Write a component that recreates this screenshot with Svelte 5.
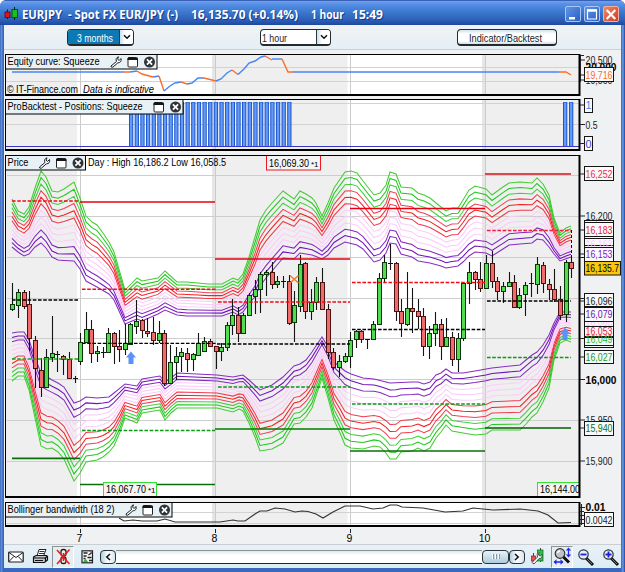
<script>
  const colors = ['#45cc33', '#1fc81f', '#3fd03a', '#f0405a', '#f62020', '#f23a50', '#fccdfb', '#fcc9fb', '#fccdfb', '#8526c4', '#6f12b8', '#8a2cc4'];

  const upperOuter = [[12,199],[18,211],[24,214],[29,207],[35,188],[41,171],[46,177],[52,191],[58,192],[64,189],[74,182],[80,198],[86,216],[92,222],[97,225],[103,233],[109,242],[114,252],[125,290],[131,284],[137,278],[142,281],[158,278],[165,271],[177,282],[187,282],[198,283],[208,284],[222,284],[233,278],[238,280],[243,274],[249,257],[255,237],[260,220],[266,210],[272,203],[283,191],[294,199],[300,191],[306,194],[312,198],[316,203],[322,216],[328,203],[334,188],[345,172],[351,171],[357,173],[363,181],[374,195],[380,193],[386,185],[390,172],[396,174],[401,187],[412,188],[418,193],[424,195],[430,198],[441,207],[446,211],[452,208],[458,208],[463,200],[469,190],[475,186],[486,189],[492,195],[503,187],[509,183],[520,182],[532,183],[537,178],[543,184],[549,195],[554,218],[560,233],[566,228],[571,226]];
  const upperInner = [[12,247],[18,252],[24,256],[29,254],[35,247],[41,243],[46,248],[52,257],[58,260],[74,261],[80,269],[86,281],[97,287],[109,294],[114,300],[125,324],[137,319],[142,321],[158,314],[165,310],[177,315],[187,316],[222,316],[233,312],[238,315],[243,312],[249,303],[255,297],[260,286],[266,278],[272,271],[283,258],[294,259],[300,253],[312,255],[322,259],[328,255],[334,248],[345,242],[357,245],[363,249],[374,262],[380,260],[386,253],[390,243],[396,244],[401,254],[412,257],[418,261],[430,263],[441,266],[446,268],[458,266],[463,262],[469,256],[475,252],[486,253],[492,256],[503,249],[509,245],[520,244],[532,243],[537,239],[543,240],[549,247],[554,254],[560,261],[571,257]];
  const lowerInner = [[12,333],[18,332],[24,332],[29,340],[35,358],[41,373],[52,380],[58,383],[64,387],[74,403],[80,401],[86,397],[97,398],[109,397],[114,393],[125,384],[137,386],[142,379],[160,376],[165,382],[171,378],[177,373],[187,375],[217,375],[233,377],[243,375],[249,380],[260,390],[266,388],[272,385],[283,377],[294,366],[300,364],[306,360],[312,352],[322,337],[328,347],[334,362],[340,367],[345,371],[351,374],[363,378],[374,379],[390,383],[412,382],[418,382],[424,384],[430,382],[436,375],[441,373],[446,369],[452,373],[463,373],[475,371],[486,369],[503,366],[520,365],[526,360],[532,355],[537,352],[543,345],[549,335],[554,323],[560,312],[571,312]];
  const lowerOuter = [[12,381],[18,376],[24,376],[29,390],[35,418],[41,446],[47,449],[52,448],[58,452],[64,459],[74,481],[80,473],[86,462],[97,460],[103,457],[109,452],[114,446],[120,432],[125,418],[137,423],[142,413],[160,410],[165,420],[171,413],[177,408],[217,408],[233,412],[239,409],[243,411],[249,423],[255,437],[260,451],[272,449],[283,443],[294,424],[300,423],[306,417],[312,408],[322,378],[328,398],[334,420],[340,433],[345,445],[351,448],[363,449],[374,446],[380,447],[386,453],[390,459],[396,459],[401,452],[412,451],[418,448],[424,451],[430,448],[436,438],[441,432],[446,425],[452,431],[463,433],[475,435],[486,434],[492,430],[520,430],[526,424],[532,417],[537,413],[543,402],[549,388],[554,360],[560,343],[566,340],[571,342]];

  function at(points, x) {
    for (let i = 1; i < points.length; i++) {
      if (x <= points[i][0]) {
        const [x0, y0] = points[i - 1];
        const [x1, y1] = points[i];
        return y0 + ((y1 - y0) * (x - x0)) / (x1 - x0);
      }
    }
    return points[points.length - 1][1];
  }
  function band(outer, inner) {
    const xs = outer.map((p) => p[0]);
    return colors.map((color, k) => ({
      color,
      points: xs.map((x) => {
        const a = at(outer, x);
        const b = at(inner, x);
        return `${x},${(a + ((b - a) * k) / 11).toFixed(1)}`;
      }).join(' ')
    }));
  }
  const bands = [...band(upperOuter, upperInner), ...band(lowerOuter, lowerInner)];

  // x, high, low, body top, body bottom, direction
  const candles = [
    [12,283,311,304,309,1],[18,289,318,292,305,1],[24,290,309,292,306,0],[29,291,350,304,338,0],[35,336,388,340,368,0],[41,358,397,370,387,0],[46,349,388,357,387,1],[52,316,362,353,357,1],[57,351,372,354,354,1],[63,355,375,356,359,0],[69,352,379,359,378,0],[75,376,383,378,378,1],
    [80,333,365,342,361,1],[86,312,343,329,342,1],[91,320,363,329,353,0],[97,346,362,351,353,1],[103,347,358,352,352,1],[108,328,353,333,352,1],[114,332,364,333,346,0],[119,330,362,346,349,0],[125,324,355,343,349,1],[130,323,345,324,344,1],[136,300,334,321,326,1],[142,319,338,320,330,0],[147,318,337,331,333,0],[153,317,345,332,340,0],[159,321,343,333,340,1],[164,330,386,333,383,0],[170,345,383,362,383,1],[176,347,380,356,362,1],[181,348,372,352,356,1],[187,348,372,353,359,0],[193,353,371,354,359,1],[198,333,355,343,355,1],[204,337,352,341,351,1],[210,339,347,341,346,0],
    [216,346,369,346,351,0],[221,343,361,347,351,1],[227,322,351,325,347,1],[232,299,335,315,325,1],[238,307,342,315,333,0],[243,313,334,315,333,1],[249,293,315,295,315,1],[255,280,314,289,296,1],[260,272,313,274,289,1],[266,270,296,272,274,1],[272,262,289,272,284,0],[277,276,288,281,284,1],[283,276,288,281,281,1],[289,275,325,281,323,0],[294,291,342,305,322,1],[300,255,312,264,306,1],[305,262,319,263,311,0],[311,289,320,302,311,1],[316,277,310,282,302,1],[322,268,309,282,309,0],[328,304,359,309,352,0],[333,348,370,352,367,0],[339,355,377,361,367,1],[345,353,363,356,361,1],
    [350,332,368,340,356,1],[356,330,348,331,339,1],[361,330,343,331,339,0],[367,339,349,339,339,1],[373,321,339,324,339,1],[379,273,325,278,324,1],[384,255,282,262,278,1],[390,244,270,263,263,1],[396,262,321,263,311,0],[401,299,337,311,323,0],[407,272,326,308,324,1],[412,288,333,308,311,0],[418,299,329,311,316,0],[423,308,356,316,346,0],[429,326,359,333,346,1],[435,312,346,324,333,1],[441,319,360,324,346,0],[446,318,346,337,346,1],[452,332,366,337,359,0],[458,333,372,338,359,1],[463,282,341,283,338,1],[469,262,304,272,283,1],[475,271,290,272,279,0],[480,262,292,279,288,0],
    [486,255,289,263,288,1],[492,251,288,263,281,0],[497,277,300,281,291,0],[503,282,303,286,291,1],[509,272,286,282,286,1],[514,275,307,282,307,0],[519,288,309,295,307,1],[525,282,316,285,294,1],[531,273,297,283,283,1],[537,257,294,264,284,1],[543,262,293,265,283,0],[549,279,300,284,289,0],[554,269,302,289,299,0],[560,286,320,299,315,0],[566,260,322,262,314,1],[571,257,278,262,268,0]
  ];

  // x1, x2, y, colour, dashed
  const levels = [
    [80,215,202,'#e80010',0],[215,350,259,'#e80010',0],[350,485,208.5,'#e80010',0],[485,571,174,'#d4121c',0],
    [12,78,201,'#f40a14',1],[82,216,289.3,'#f40a14',1],[218,350,302,'#f40a14',1],[352,485,282.5,'#f40a14',1],[487,571,230.5,'#f0203a',1],
    [12,79,300,'#000',1],[82,216,343.4,'#000',1],[217,350,344,'#000',1],[352,485,329.5,'#000',1],[487,571,301,'#000',1],
    [12,78,359,'#18a818',1],[82,215,430.5,'#0a9a14',1],[218,350,387,'#0a9a14',1],[352,485,404,'#0a9a14',1],[487,571,357.5,'#0a9a14',1],
    [12,80,458.3,'#087008',0],[80,215,484.5,'#087008',0],[215,350,429,'#007c00',0],[350,485,451,'#087008',0],[485,571,428,'#005c00',0]
  ];

  const equity = [
    ['b','12,72 124,72'],['o','124,72 130,72'],['b','130,72 137,71'],['o','137,71 142,74 153,77'],['b','153,77 159,76'],['o','159,76 164,91'],
    ['b','164,91 170,86 175,83 181,82'],['o','181,82 187,84'],['b','187,84 192,83 198,78 204,78'],['o','204,78 216,81'],['b','216,81 221,79 227,73 232,70'],['o','232,70 238,74.5'],
    ['b','238,74.5 244,69 249,63 255,61 261,57 265,56'],['o','265,56 272,60'],['b','272,59 282,59'],['o','282,59 288,72 293,72'],['b','293,72 559,72'],['o','559,72 566,72 571,75']
  ];
  const bars = [...Array.from({ length: 29 }, (_, i) => 129 + i * 5.65), 563, 569];
  const bandwidth = '119,518 124,521 133,520 142,521 157,521 165,519 175,522 220,522 233,520 238,521 245,521 255,514 260,511 267,511 275,508 285,509 295,512 302,511 308,511.5 316,514 323,518 333,512 345,506 360,506 373,509 383,508 390,505 397,505 402,507 423,508 445,512 463,511 473,508 493,510 520,509 538,511 548,515 558,523 571,522.5';

  // text, centre y, box top, box bottom, colour
  const priceTags = [
    ['16,200',216,0,0,'#222'],
    ['16,183',230,222,237,'#ee2030'],
    ['16,163',244,238,246,'#fcd0fc'],
    ['16,153',254,247,262,'#8220c0'],
    ['16,065',322,318,330,'#fcc8fa'],
    ['16,053',331,326,337,'#f02030'],
    ['16,049',339,337,346,'#30b828'],
    ['16,096',301,293,307,'#222'],
    ['16,079',314,307,322,'#6c18b0'],
    ['16,252',174,166,181,'#e83040'],
    ['16,027',357,350,364,'#1c9c28'],
    ['15,950',420,0,0,'#222'],
    ['15,940',428,421,436,'#107010'],
    ['15,900',461,0,0,'#222']
  ];
</script>

{#snippet fit(cls, width, text)}
  <svg class="fit {cls}" {width} height="16"><text x="0" y="12" textLength={width} lengthAdjust="spacingAndGlyphs">{text}</text></svg>
{/snippet}

{#snippet backdrop(top, bottom)}
  <rect x="6" y={top} width="573" height={bottom - top} fill="#efefef" />
  <rect x="77" y={top} width="135" height={bottom - top} fill="#fff" />
  <rect x="347.5" y={top} width="134.5" height={bottom - top} fill="#fff" />
  {#each [212, 482] as x}<rect {x} y={top} width="3" height={bottom - top} fill="#e6e6e6" />{/each}
  {#each [80, 215, 350, 485] as x}<rect {x} y={top} width="1" height={bottom - top} fill="#cbcbcb" />{/each}
{/snippet}

{#snippet frame(top, bottom)}
  <path d="M5.5 {bottom}V{top + 0.5}H580" fill="none" stroke="#000" />
  <path d="M5 {bottom - 1}H579.5V{top}" fill="none" stroke="#000" stroke-width="2" />
{/snippet}

{#snippet header(top, width, text, textWidth, wrench)}
  <rect x="5.5" y={top + 0.5} {width} height="14.5" fill="#e8f1f6" stroke="#000" />
  <text class="tx" x="7.5" y={top + 11.3} textLength={textWidth} lengthAdjust="spacingAndGlyphs">{text}</text>
  {#if wrench}
    <g transform="translate({width - 42} {top + 2})">
      <path d="M1.5 10L7 5.5Q5.5 2 9 .8L8 3.2L9.6 4.4L11.6 2.5Q12.2 6.8 8.4 6.8L3.3 11.2Q1.2 11.6 1.5 10Z" fill="#fff" stroke="#1c2024" stroke-width="1" />
    </g>
  {/if}
  <g transform="translate({width - 24.5} {top + 2.5})">
    <rect x="1" y="1" width="9.5" height="9.5" rx="1" fill="#fff" stroke="#222" />
    <path d="M.5 3.5V2L2 .5H6V1.5H10.5L11 3.5Z" fill="#151515" />
  </g>
  <g transform="translate({width - 2} {top + 8})">
    <circle r="5.5" fill="#303436" />
    <path d="M-2.6-2.6L2.6 2.6M2.6-2.6L-2.6 2.6" stroke="#fff" stroke-width="1.7" />
  </g>
{/snippet}

{#snippet tag(text, cy, top, bottom, color, width = 28)}
  {#if bottom}<rect x="584.5" y={top + 0.5} width={width + 1} height={bottom - top - 1} fill="#f8fafb" stroke="#151515" />{/if}
  {#if !bottom || bottom - top > 13}<path d="M580 {cy}h5" stroke="#222" />{/if}
  <text class="tx" x="585.5" y={cy + 4} fill={color} textLength={width - 1} lengthAdjust="spacingAndGlyphs">{text}</text>
{/snippet}

{#snippet magnifier(sign)}
  <svg width="20" height="20" viewBox="0 0 20 20">
    <path d="M9 10L17 18" stroke="#111" stroke-width="3" />
    <path d="M11 12L16 17" stroke="#777" stroke-width="1" />
    <circle cx="7.5" cy="7.5" r="4.7" fill="#e3edfb" stroke="#333" stroke-width="1.2" />
    <path d={sign === '+' ? 'M4.5 7.5h6M7.5 4.5v6' : 'M4.5 7.5h6'} stroke="#1720e8" stroke-width="1.8" />
  </svg>
{/snippet}

<div class="window">
  <header class="title">
    <svg class="logo" width="15" height="14" viewBox="0 0 15 14">
      <path d="M3.5 2.5v9.5M10.5 0v13" stroke="#101820" />
      <rect x="1" y="5" width="5" height="5.5" fill="#e81018" stroke="#5a0808" stroke-width=".8" />
      <rect x="8" y="2.5" width="5.5" height="8" fill="#18c020" stroke="#063e0c" stroke-width=".8" />
    </svg>
    {@render fit('t-name', 156, 'EURJPY  - Spot FX EUR/JPY (-)')}
    {@render fit('t-price', 107, '16,135.70 (+0.14%)')}
    {@render fit('t-time', 33, '1 hour')}
    {@render fit('t-clock', 31, '15:49')}
    <div class="buttons">
      <i class="wb"><svg width="16" height="17"><rect x="4" y="11" width="6" height="2.5" fill="#fff" /></svg></i>
      <i class="wb"><svg width="16" height="17"><path d="M3.5 4V13h9V4Z" fill="none" stroke="#fff" stroke-width="1.2" /><path d="M3 4.5h10" stroke="#fff" stroke-width="2.4" /></svg></i>
      <i class="wb close"><svg width="16" height="17"><path d="M3.7 4L12.3 13M12.3 4L3.7 13" stroke="#fff" stroke-width="2.1" /></svg></i>
    </div>
  </header>

  <div class="toolbar">
    <div class="combo period">
      <span class="value">{@render fit('', 36, '3 months')}</span>
      <span class="arrow"><svg width="8" height="6"><path d="M1 1.2L4 4.2L7 1.2" fill="none" stroke="#111" stroke-width="1.5" /></svg></span>
    </div>
    <div class="combo unit">
      <span class="value">{@render fit('', 25, '1 hour')}</span>
      <span class="arrow"><svg width="8" height="6"><path d="M1 1.2L4 4.2L7 1.2" fill="none" stroke="#111" stroke-width="1.5" /></svg></span>
    </div>
    <div class="button">{@render fit('', 73, 'Indicator/Backtest')}</div>
  </div>

  <main>
    <svg class="equity" width="617" height="47" viewBox="4 51 617 47">
      {@render backdrop(55, 95)}
      <path d="M6 67.5H579M6 81.5H579" stroke="#d2d2d2" />
      {#each equity as [c, points]}
        <polyline {points} fill="none" stroke={c === 'b' ? '#4684f4' : '#fb6d26'} stroke-width="1.4" />
      {/each}
      <text class="tx" x="7" y="93" textLength="71" lengthAdjust="spacingAndGlyphs">© IT-Finance.com</text>
      <text class="tx italic" x="83" y="93" textLength="71" lengthAdjust="spacingAndGlyphs">Data is indicative</text>
      {@render frame(54, 96)}
      {@render header(54, 151.5, 'Equity curve: Squeeze', 92, true)}
      {@render tag('20,500', 60, 0, 0, '#222')}
      <text class="tx bold" x="585.5" y="71" textLength="31" lengthAdjust="spacingAndGlyphs">20,000</text>
      {@render tag('19,500', 80, 0, 0, '#222')}
      <path d="M580.5 55V82M580 55.5h4" stroke="#222" />
      {@render tag('19,716', 75, 67, 82, '#fb6d26')}
    </svg>

    <svg width="617" height="55" viewBox="4 98 617 55">
      {@render backdrop(100, 150)}
      <path d="M6 103.5H579M6 124.5H579" stroke="#d2d2d2" />
      {#each bars as x}
        <rect {x} y="102" width="4.3" height="45" fill="#1c57cc" />
        <rect x={x + 1} y="102.5" width="2.3" height="44" fill="#639af9" />
      {/each}
      <path d="M6 146.5H579" stroke="#3838c4" />
      {@render frame(99, 151)}
      {@render header(99, 177.5, 'ProBacktest - Positions: Squeeze', 135, false)}
      {@render tag('1', 105, 98, 113, '#4f84ee', 7)}
      {@render tag('0.5', 124.5, 0, 0, '#222', 13)}
      {@render tag('0', 143.5, 136, 151, '#4040d0', 7)}
    </svg>

    <svg width="617" height="347" viewBox="4 153 617 347">
      {@render backdrop(156, 497)}
      {#each [175.5, 216.5, 257.5, 298.5, 338.5, 379.5, 420.5, 461.5] as y}
        <path d="M7 {y}H579" stroke="#cdcdcd" />
      {/each}
      {#each bands as line}
        <polyline points={line.points} fill="none" stroke={line.color} stroke-width="1.05" />
      {/each}
      {#each candles as [x, high, low, top, bottom, up]}
        <path d="M{x + 0.5} {high}V{low}" stroke="#151515" stroke-width="1.1" />
        {#if top === bottom}
          <path d="M{x - 2} {top + 0.5}h5" stroke="#111" />
        {:else}
          <rect x={x - 1.5} y={top + 0.5} width="4" height={bottom - top} fill={up ? '#52dc50' : '#ee6c6c'} stroke={up ? '#0b360b' : '#4c1212'} />
        {/if}
      {/each}
      <path d="M571.5 230V257M136.5 301v12M29.5 338V352M35.5 368V388" stroke="#111" stroke-dasharray="3 2" />
      {#each levels as [x1, x2, y, color, dashed]}
        <path d="M{x1} {y}H{x2}" stroke={color} stroke-width={dashed ? 1.4 : 1.7} stroke-dasharray={dashed ? '3.6 1.6' : 'none'} />
      {/each}
      <path d="M290 275.5L298.5 283M298.5 275.5L290 283" stroke="#f27a30" stroke-width="1.5" />
      <path d="M131 351.5L136 357.5H133.5V364H128.5V357.5H126Z" fill="#5a92fa" />
      <path d="M565 327.5L570 334H567.5V340H562.5V334H560Z" fill="#5a92fa" />
      <text class="tx" x="88" y="166.3" textLength="138" lengthAdjust="spacingAndGlyphs">Day : High 16,186.2 Low 16,058.5</text>
      <rect x="266.5" y="155.5" width="54" height="14.5" fill="#f5f5f5" stroke="#ee1820" />
      <text class="tx" x="269" y="167" textLength="40" lengthAdjust="spacingAndGlyphs">16,069.30</text>
      <text class="tx small" x="311" y="167">*1</text>
      <rect x="103.5" y="482.5" width="53" height="14" fill="#f5f5f5" stroke="#34e034" />
      <text class="tx" x="106" y="493" textLength="40" lengthAdjust="spacingAndGlyphs">16,067.70</text>
      <text class="tx small" x="148" y="493">*1</text>
      <rect x="537.5" y="482.5" width="44" height="14" fill="#f5f5f5" stroke="#34e034" />
      <text class="tx" x="540" y="493" textLength="40" lengthAdjust="spacingAndGlyphs">16,144.00</text>
      <rect x="580" y="482" width="4" height="16" fill="#eff1f3" />
      {@render frame(155, 498)}
      {@render header(155, 80, 'Price', 21, true)}
      {#each [257, 298, 338] as y}<path d="M580 {y + 0.5}h5" stroke="#222" />{/each}
      <rect x="584.5" y="220.5" width="29" height="27" fill="#f8fafb" stroke="#151515" />
      <rect x="584.5" y="322.5" width="29" height="25" fill="#f8fafb" stroke="#151515" />
      {#each priceTags as [text, cy, top, bottom, color]}
        {@render tag(text, cy, top, bottom, color)}
      {/each}
      <text class="tx bold" x="585.5" y="383.5" textLength="31" lengthAdjust="spacingAndGlyphs">16,000</text>
      <path d="M580 379.5h5" stroke="#222" />
      <rect x="584.5" y="261.5" width="36" height="13.5" fill="#fbc70c" stroke="#151515" />
      <text class="tx" x="585.5" y="272.3" textLength="33.5" lengthAdjust="spacingAndGlyphs">16,135.7</text>
    </svg>

    <svg width="617" height="44" viewBox="4 500 617 44">
      {@render backdrop(503, 526)}
      <path d="M6 512.5H579M6 523.5H579" stroke="#d2d2d2" />
      <polyline points={bandwidth} fill="none" stroke="#333" stroke-width="1.1" />
      {@render frame(502, 527)}
      {@render header(502, 166.5, 'Bollinger bandwidth (18 2)', 107, true)}
      <path d="M581.5 504V525M580 507.5h5M580 511.5h4M580 515.5h4M580 519.5h4M580 523.5h4" stroke="#222" />
      <text class="tx bold" x="585.5" y="511" textLength="20" lengthAdjust="spacingAndGlyphs">0.01</text>
      {@render tag('0.0042', 519.5, 512, 527, '#222')}
      {#each [['7', 80], ['8', 215], ['9', 350], ['10', 485]] as [day, x]}
        <path d="M{x + 0.5} 529v4" stroke="#222" />
        <text class="tx" x={x - 0.5} y="542" text-anchor="middle">{day}</text>
      {/each}
    </svg>
  </main>

  <footer>
    <svg class="mail" width="16" height="12" viewBox="0 0 16 12">
      <rect x=".7" y="1" width="14.5" height="10" rx="1" fill="#fff" stroke="#1c1c1c" stroke-width="1.2" />
      <path d="M1 1.5L8 6.5L15 1.5M1 10.5L5.8 5.5M15 10.5L10.2 5.5" fill="none" stroke="#1c1c1c" />
    </svg>
    <svg class="print" width="17" height="17" viewBox="0 0 17 17">
      <path d="M5 8L7 1.5H14L11.5 8Z" fill="#fff" stroke="#222" />
      <path d="M7.5 3.5h5M7 5.5h5" stroke="#333" />
      <path d="M1.5 9L4 7.5H14.5L15.5 8.5V12L12.5 14.5H1.5Z" fill="#c2c8ca" stroke="#111" stroke-width="1.2" />
      <path d="M2 10h10.5M3 12.5h8M12.5 10.5L15 8.5M13.5 10V13" stroke="#111" stroke-width="1.2" />
    </svg>
    <div class="pressed link">
      <svg width="18" height="18" viewBox="0 0 18 18">
        <rect x="7" y="1.5" width="5" height="6.5" rx="2.2" fill="#eee" stroke="#222" stroke-width="1.3" />
        <rect x="7" y="9" width="5" height="6.5" rx="2.2" fill="#eee" stroke="#222" stroke-width="1.3" />
        <path d="M9.5 5v8" stroke="#555" stroke-width="1.5" />
        <path d="M3 2L15.5 16M15.5 1.5L3 16" stroke="#f01818" stroke-width="1.5" />
      </svg>
    </div>
    <svg class="list" width="14" height="14" viewBox="0 0 14 14">
      <rect x="1" y=".8" width="10.5" height="12" fill="#f3f5f4" stroke="#222" stroke-width="1.2" />
      <path d="M2.5 3h4M7.5 5l3-2M2.5 6h3M6.5 7.5h4M8 10.5h3M2.5 8.5h2" stroke="#222" stroke-width="1.3" />
      <path d="M8 1.5h3v2Z" fill="#e83030" /><path d="M2 12L4.5 8.5L7 12Z" fill="#28b838" />
    </svg>
    <div class="scroll">
      <span class="sb"><svg width="6" height="8"><path d="M5 1L1.8 4L5 7" fill="none" stroke="#111" stroke-width="1.5" /></svg></span>
      <span class="track"></span>
      <span class="sb thumb"><i></i><i></i><i></i></span>
      <span class="sb"><svg width="6" height="8"><path d="M1 1L4.2 4L1 7" fill="none" stroke="#111" stroke-width="1.5" /></svg></span>
    </div>
    <svg class="candle" width="15" height="17" viewBox="0 0 15 17">
      <path d="M3.5 5v11M10.5 0v14" stroke="#444" />
      <rect x="1.5" y="8" width="4" height="5" fill="#e85050" stroke="#722" stroke-width=".7" />
      <rect x="7.5" y="2" width="5.5" height="11" fill="#2fc448" stroke="#165c20" stroke-width=".7" />
      <path d="M2 14.5L7.5 9Q6 6 9 4.5L8.5 7L10.2 8L12 6.3Q12.8 10.5 9.2 10.5L4 16Z" fill="#f3f3f3" stroke="#333" stroke-width=".8" />
    </svg>
    <div class="pressed zoom">
      <svg width="19" height="19" viewBox="0 0 19 19">
        <path d="M9 8.5L16 15.5" stroke="#111" stroke-width="3" />
        <circle cx="7" cy="6.5" r="4.8" fill="#bcc2c6" stroke="#333" stroke-width="1.2" />
        <path d="M4.5 6Q5 4 7 4" fill="none" stroke="#fff" stroke-width="1.3" />
        <path d="M15.5 2v7M1.5 15h8" stroke="#1b2ae8" stroke-width="1.3" />
        <path d="M12.8 3.5L15.5 .5L18.2 3.5ZM12.8 7.5L15.5 10.5L18.2 7.5ZM3.5 12.3L.5 15L3.5 17.7ZM7.5 12.3L10.5 15L7.5 17.7Z" fill="#1b2ae8" />
      </svg>
    </div>
    <span class="mag minus">{@render magnifier('-')}</span>
    <span class="mag">{@render magnifier('+')}</span>
  </footer>
</div>

<style>
  .window {
    width: 625px;
    height: 572px;
    box-sizing: border-box;
    display: flex;
    flex-direction: column;
    padding: 0 4px 4px;
    overflow: hidden;
    border-radius: 6px 6px 0 0;
    background: linear-gradient(90deg, #2450a8 0, #6a9be4 1px, #3968bc 3px, #3968bc 621px, #6a9be4 623px, #1c429c 625px);
    font: 11px 'Liberation Sans', sans-serif;
    color: #1c1c1c;
  }
  svg { display: block; flex: none; }
  .tx { font: 10.5px 'Liberation Sans', sans-serif; white-space: pre; }
  .italic { font-style: italic; }
  .bold { font-weight: bold; }
  .small { font-size: 8px; }
  .fit { overflow: visible; }
  .fit text { font: 11px 'Liberation Sans', sans-serif; fill: currentColor; white-space: pre; }

  .title {
    height: 25px;
    flex: none;
    margin: 0 -4px;
    padding: 0 4px;
    display: flex;
    align-items: center;
    border-radius: 6px 6px 0 0;
    background: linear-gradient(#1b439c 0, #709eee 1.5px, #5790e6 4px, #3e7bd2 11px, #2f63ba 19px, #2352aa 23px, #1d479c 25px);
    color: #fff;
  }
  .logo { margin: 2px 3px 0 0; }
  .title .fit { margin-top: 5px; }
  .title .fit text { font: bold 12px 'Open Sans', 'Liberation Sans', sans-serif; text-shadow: 1px 1px 0 #163a8a; }
  .title .t-price { margin-left: 13px; }
  .title .t-time { margin-left: 13px; }
  .title .t-clock { margin-left: 8px; }
  .buttons { display: flex; gap: 3px; margin-left: auto; margin-top: 3px; padding-right: 2px; }
  .wb {
    width: 16px; height: 16px; box-sizing: border-box; border: 1px solid #a9c7f2; border-radius: 2px;
    background: linear-gradient(135deg, #5f96e8, #2a5fc2);
  }
  .wb svg { margin: -1px; }
  .close { border-color: #f0b0a0; background: linear-gradient(135deg, #f08868, #cc3f20); }

  .toolbar {
    height: 25px;
    flex: none;
    display: flex;
    align-items: flex-start;
    padding: 4px 0 0 63px;
    box-sizing: border-box;
    background: linear-gradient(#f0f3f4, #e5eff4);
    border-bottom: 1px solid #ccd1d4;
  }
  .combo, .button {
    height: 17px; box-sizing: border-box; display: flex; border: 1px solid #242a2e;
    border-bottom-width: 2px; border-radius: 4px; background: #fff; overflow: hidden;
  }
  .period { width: 67px; }
  .period .value { background: #0c78b4; color: #fff; padding-left: 9px; }
  .unit { width: 71px; margin-left: 126px; }
  .value { flex: 1; padding-left: 1px; }
  .arrow {
    width: 13px; display: flex; align-items: center; justify-content: center;
    border-left: 1px solid #30383c; background: linear-gradient(90deg, #c8e0ec, #fff 5px);
  }
  .button {
    width: 100px; margin-left: 126px; padding-left: 11px;
    background: linear-gradient(#cfe3ee, #fff 4px, #fff 11px, #c9dfeb);
  }

  main { display: flex; flex-direction: column; flex: none; height: 494px; background: #eff1f3; }
  .equity { margin-top: 1px; }

  footer {
    height: 24px;
    flex: none;
    display: flex;
    align-items: center;
    box-sizing: border-box;
    background: linear-gradient(#e8f1f7, #dcecf5);
    border-top: 1px solid #c9cfd2;
  }
  .mail { margin-left: 4px; }
  .print { margin-left: 8px; }
  .pressed {
    width: 22px; height: 22px; flex: none; box-sizing: border-box; display: flex; align-items: center; justify-content: center;
    border: 1px solid; border-color: #8c9296 #fff #fff #8c9296; background: #e7edf0;
  }
  .link { margin-left: 3px; }
  .list { margin-left: 7px; }
  .scroll { width: 427px; height: 14px; margin-left: 5px; display: flex; }
  .sb {
    width: 16px; box-sizing: border-box; display: flex; align-items: center; justify-content: center;
    border: 1px solid #2c3438; border-radius: 4px; background: linear-gradient(90deg, #b4cfdf, #fff 7px, #d5e6ef);
  }
  .track { flex: 1; background: linear-gradient(#dfe8ec, #fff 4px); border: solid #20282c; border-width: 1px 0; border-top-color: #8a9296; }
  .thumb { width: 27px; gap: 1px; background: linear-gradient(#e7f3f9, #aecbdc); }
  .thumb i { width: 1px; height: 5px; border-right: 1px solid #8499a5; background: #fff; }
  .candle { margin-left: 5px; }
  .zoom { margin-left: 6px; }
  .mag { margin-left: 5px; }
  .minus { margin-left: 3px; }
</style>
